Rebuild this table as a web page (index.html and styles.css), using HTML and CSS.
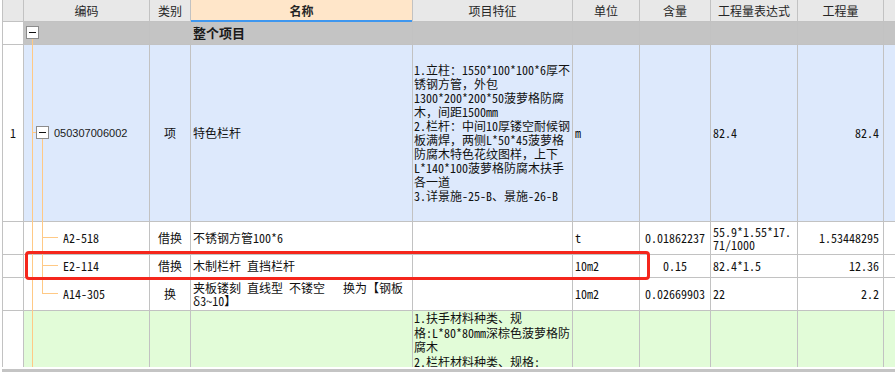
FILE: index.html
```html
<!DOCTYPE html>
<html lang="zh-CN">
<head>
<meta charset="utf-8">
<title>清单</title>
<link rel="stylesheet" href="styles.css">
</head>
<body>
<div class="wrap">
  <div class="grid">
    <div class="row hd">
      <div class="c"></div>
      <div class="c ctr">编码</div>
      <div class="c ctr">类别</div>
      <div class="c ctr name-h">名称</div>
      <div class="c ctr">项目特征</div>
      <div class="c ctr">单位</div>
      <div class="c ctr">含量</div>
      <div class="c ctr">工程量表达式</div>
      <div class="c ctr">工程量</div>
      <div class="c"></div>
    </div>

    <div class="row grp">
      <div class="c num"></div>
      <div class="c code"><span class="box b-grp"></span><span class="vl v32 from-box"></span></div>
      <div class="c"></div>
      <div class="c bold">整个项目</div>
      <div class="c"></div>
      <div class="c"></div>
      <div class="c"></div>
      <div class="c"></div>
      <div class="c"></div>
      <div class="c"></div>
    </div>

    <div class="row blue">
      <div class="c num ctr">1</div>
      <div class="c code q-code"><span class="vl v32 full"></span><span class="hl h-q"></span><span class="box b-q"></span><span class="vl v42 from-qbox"></span>050307006002</div>
      <div class="c ctr">项</div>
      <div class="c">特色栏杆</div>
      <div class="c feat">1.立柱：1550*100*100*6厚不<br>锈钢方管，外包<br>1300*200*200*50菠萝格防腐<br>木，间距1500mm<br>2.栏杆：中间10厚镂空耐候钢<br>板满焊，两侧L*50*45菠萝格<br>防腐木特色花纹图样，上下<br>L*140*100菠萝格防腐木扶手<br>各一道<br>3.详景施-25-B、景施-26-B</div>
      <div class="c">m</div>
      <div class="c ctr"></div>
      <div class="c">82.4</div>
      <div class="c rt">82.4</div>
      <div class="c"></div>
    </div>

    <div class="row wh">
      <div class="c num"></div>
      <div class="c code sub"><span class="vl v32 full"></span><span class="vl v42 full"></span><span class="hl h-sub t15"></span>A2-518</div>
      <div class="c ctr">借换</div>
      <div class="c">不锈钢方管100*6</div>
      <div class="c"></div>
      <div class="c">t</div>
      <div class="c ctr">0.01862237</div>
      <div class="c ml">55.9*1.55*17.<br>71/1000</div>
      <div class="c rt">1.53448295</div>
      <div class="c"></div>
    </div>

    <div class="row wh">
      <div class="c num"></div>
      <div class="c code sub"><span class="vl v32 full"></span><span class="vl v42 full"></span><span class="hl h-sub t10"></span>E2-114</div>
      <div class="c ctr">借换</div>
      <div class="c">木制栏杆 直挡栏杆</div>
      <div class="c"></div>
      <div class="c">10m2</div>
      <div class="c ctr">0.15</div>
      <div class="c">82.4*1.5</div>
      <div class="c rt">12.36</div>
      <div class="c"></div>
    </div>

    <div class="row wh">
      <div class="c num"></div>
      <div class="c code sub"><span class="vl v32 full"></span><span class="vl v42 last"></span><span class="hl h-sub t15"></span>A14-305</div>
      <div class="c ctr">换</div>
      <div class="c ml">夹板镂刻 直线型 不镂空&nbsp;&nbsp;&nbsp;换为【钢板<br>δ3~10】</div>
      <div class="c"></div>
      <div class="c">10m2</div>
      <div class="c ctr">0.02669903</div>
      <div class="c">22</div>
      <div class="c rt">2.2</div>
      <div class="c"></div>
    </div>

    <div class="row grn">
      <div class="c num"></div>
      <div class="c code"><span class="vl v32 full"></span></div>
      <div class="c"></div>
      <div class="c"></div>
      <div class="c feat top">1.扶手材料种类、规<br>格:L*80*80mm深棕色菠萝格防<br>腐木<br>2.栏杆材料种类、规格:</div>
      <div class="c"></div>
      <div class="c"></div>
      <div class="c"></div>
      <div class="c"></div>
      <div class="c"></div>
    </div>
  </div>
  <div class="mark"></div>
</div>
<div class="hscroll"></div>
</body>
</html>
```

FILE: styles.css
```css
html, body {
  margin: 0;
  padding: 0;
  background: #ffffff;
}

body {
  font-family: "Noto Sans Mono CJK SC", "Noto Sans CJK SC", monospace;
  font-size: 12px;
  color: #111;
  overflow: hidden;
}

.wrap {
  position: relative;
  height: 367px;
  margin-left: 2px;
  overflow: hidden;
}

.grid {
  display: grid;
  grid-template-columns: 20px 125px 40px 221px 159px 66px 70px 86px 85px 40px;
  grid-template-rows: 21px 22px 176px 32px 22px 32px 120px;
  gap: 1px;
  padding-left: 1px;
  background: #c2c2c2;
  width: max-content;
}

.row {
  display: contents;
}

.c {
  position: relative;
  display: flex;
  align-items: center;
  padding: 0 2px;
  overflow: hidden;
  white-space: nowrap;
  line-height: 14px;
}

.ctr {
  justify-content: center;
}

.rt {
  justify-content: flex-end;
  padding-right: 4px;
}

.ml {
  white-space: normal;
  line-height: 13.5px;
}

.bold {
  font-family: "Noto Sans CJK SC", sans-serif;
  font-weight: 700;
  font-size: 13px;
  color: #1a1a1a;
}

/* header */
.hd > .c {
  background: #e8e8e8;
  font-family: "Noto Sans CJK SC", sans-serif;
  font-size: 12px;
  color: #262626;
}

.hd > .name-h {
  background: #ffe6c9;
  font-weight: 700;
  box-shadow: inset 0 -1px 0 #3f97ef, 0 1px 0 #3f97ef;
  z-index: 1;
}

/* row backgrounds */
.grp > .c { background: #c4c4c4; }
.blue > .c { background: #dde9fc; }
.wh > .c { background: #ffffff; }
.grn > .c { background: #e2fcd8; }
.row > .num { background: #ffffff; }

.num {
  font-size: 12px;
}

/* code column */
.code {
  overflow: visible;
}

.q-code {
  padding-left: 30px;
  font-family: "Liberation Sans", sans-serif;
  font-size: 11px;
  color: #1a1a1a;
}

.sub {
  padding-left: 39px;
}

.feat {
  padding-left: 1px;
  white-space: nowrap;
  line-height: 14px;
}

.top {
  align-items: flex-start;
  padding-top: 0;
  line-height: 14.5px;
}

/* tree lines */
.vl, .hl {
  position: absolute;
  background: #ffc985;
}

.vl {
  width: 1px;
}

.hl {
  height: 1px;
}

.v32 { left: 8px; }
.v42 { left: 18px; }

.full { top: 0; bottom: -1px; }
.from-box { top: 17px; bottom: -1px; }
.from-qbox { top: 94px; bottom: -1px; }
.last { top: 0; height: 16px; }

.h-q { left: 8px; width: 4px; top: 87px; }
.h-sub { left: 18px; width: 16px; }
.t15 { top: 15px; }
.t10 { top: 10px; }

.box {
  position: absolute;
  width: 11px;
  height: 11px;
  border: 1px solid #8c8c8c;
  background: #ffffff;
}

.box::after {
  content: "";
  position: absolute;
  left: 2px;
  top: 5px;
  width: 7px;
  height: 1px;
  background: #111;
}

.b-grp { left: 2px; top: 4px; }
.b-q { left: 12px; top: 81px; }

/* highlight mark */
.mark {
  position: absolute;
  left: 23px;
  top: 251px;
  width: 619px;
  height: 23px;
  border: 3px solid #f5261c;
  border-radius: 4px;
  pointer-events: none;
}

.hscroll {
  height: 3px;
  margin: 2px 0 0 2px;
  background: #c4c4c4;
}
```
